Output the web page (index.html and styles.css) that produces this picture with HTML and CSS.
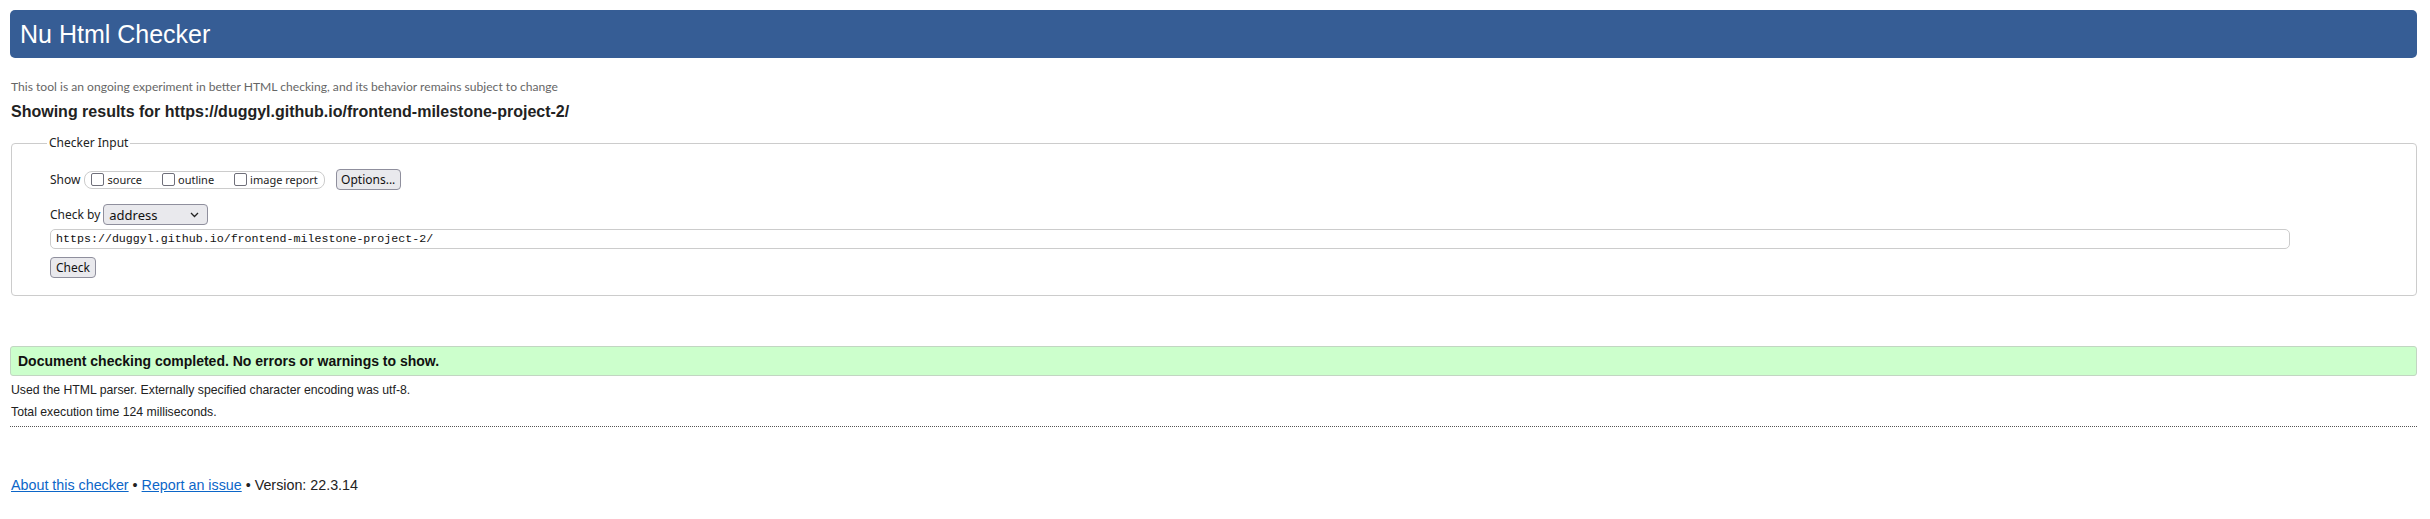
FILE: index.html
```html
<!DOCTYPE html>
<html lang="en">
<head>
<meta charset="utf-8">
<title>Showing results for https://duggyl.github.io/frontend-milestone-project-2/ - Nu Html Checker</title>
<link rel="stylesheet" href="styles.css">
</head>
<body>
<h1 class="title">Nu Html Checker</h1>
<p class="intro">This tool is an ongoing experiment in better HTML checking, and its behavior remains subject to change</p>
<h2 class="results-for">Showing results for https://duggyl.github.io/frontend-milestone-project-2/</h2>
<fieldset class="checker-input">
  <legend class="legend">Checker Input</legend>
  <div class="row show-row">
    <span class="label">Show</span>
    <span class="show-group">
      <label class="opt"><span class="cb"></span>source</label>
      <label class="opt"><span class="cb"></span>outline</label>
      <label class="opt"><span class="cb"></span>image report</label>
    </span>
    <button class="btn btn-options" type="button">Options...</button>
  </div>
  <div class="row by-row">
    <span class="label">Check by</span>
    <span class="select">address
      <svg class="chev" width="9" height="6" viewBox="0 0 9 6"><path d="M1 1 L4.5 4.5 L8 1" fill="none" stroke="#222" stroke-width="1.3"/></svg>
    </span>
  </div>
  <div class="url">https://duggyl.github.io/frontend-milestone-project-2/</div>
  <div class="row check-row"><button class="btn btn-check" type="submit">Check</button></div>
</fieldset>
<p class="success">Document checking completed. No errors or warnings to show.</p>
<p class="details">Used the HTML parser. Externally specified character encoding was utf-8.</p>
<p class="details">Total execution time 124 milliseconds.</p>
<hr class="sep">
<p class="footer"><a href="#" class="link">About this checker</a> • <a href="#" class="link">Report an issue</a> • Version: 22.3.14</p>
</body>
</html>
```
FILE: styles.css
```css
html, body { background: #fff; }
body {
  margin: 10px 13px 0 10px;
  font-family: "Liberation Sans", Arial, sans-serif;
  color: #222;
}
.title {
  margin: 0;
  height: 48px;
  line-height: 48px;
  padding-left: 10px;
  background: #365d95;
  color: #fff;
  font-weight: normal;
  font-size: 25px;
  border-radius: 5px;
}
.intro {
  margin: 21px 0 0 1px;
  font-family: Lato, sans-serif;
  font-size: 12.1px;
  line-height: 16px;
  color: #666;
}
.results-for {
  margin: 7px 0 0 1px;
  font-size: 16px;
  line-height: 20px;
  font-weight: bold;
  color: #222;
}
.checker-input {
  margin: 13px 0 0 1px;
  padding: 18px 38px 17px 38px;
  border: 1px solid #ccc;
  border-radius: 4px;
  font-family: "Noto Sans", sans-serif;
  font-size: 12px;
}
.legend {
  padding: 0 2px;
  margin-left: -3px;
  line-height: 16px;
  font-size: 12px;
  color: #222;
}
.row { display: flex; align-items: center; }
.label { font-size: 12px; color: #222; }
.show-group {
  display: inline-flex;
  align-items: center;
  height: 18px;
  margin-left: 4px;
  padding: 0 6px 0 6px;
  border: 1px solid #ccc;
  border-radius: 8px;
  box-sizing: border-box;
  gap: 20px;
}
.opt {
  display: inline-flex;
  align-items: center;
  gap: 3px;
  font-size: 11px;
  color: #222;
}
.cb {
  width: 13px;
  height: 13px;
  box-sizing: border-box;
  border: 1px solid #6f6f7a;
  border-radius: 2px;
  background: #fff;
}
.btn {
  font-family: "Noto Sans", sans-serif;
  font-size: 12px;
  color: #111;
  background: #e9e9ed;
  border: 1px solid #8f8f9d;
  border-radius: 4px;
  height: 21px;
  padding: 0 4px;
  line-height: 19px;
}
.btn-options { margin-left: 11px; width: 65px; }
.by-row { margin-top: 14px; }
.select {
  display: inline-flex;
  align-items: center;
  justify-content: space-between;
  box-sizing: border-box;
  width: 105px;
  height: 21px;
  margin-left: 3px;
  padding: 0 8px 0 5px;
  background: #e9e9ed;
  border: 1px solid #8f8f9d;
  border-radius: 4px;
  font-size: 13px;
  color: #111;
}
.url {
  margin-top: 4px;
  width: 96.2%;
  height: 20px;
  box-sizing: border-box;
  padding: 0 5px;
  border: 1px solid #ccc;
  border-radius: 5px;
  font-family: "Liberation Mono", monospace;
  font-size: 11.65px;
  line-height: 18px;
  color: #111;
}
.check-row { margin-top: 8px; }
.btn-check { width: 46px; }
.success {
  margin: 50px 0 0 0;
  height: 30px;
  box-sizing: border-box;
  padding-left: 7px;
  background: #ccffcc;
  border: 1px solid #c2d6c2;
  border-radius: 3px;
  font-weight: bold;
  font-size: 14px;
  line-height: 28px;
  color: #111;
}
.details {
  margin: 0 0 0 1px;
  font-size: 12.25px;
  line-height: 22px;
  color: #222;
}
.success + .details { margin-top: 3px; }
.sep {
  margin: 3px 0 0 0;
  border: 0;
  border-top: 1px dotted #555;
  height: 0;
}
.footer {
  margin: 49px 0 0 1px;
  font-size: 14.3px;
  line-height: 18px;
  color: #222;
}
.link { color: #0c66c8; }
```
